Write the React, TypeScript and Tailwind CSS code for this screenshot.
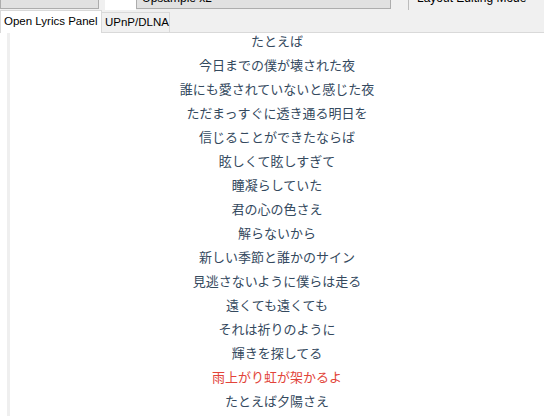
const lines = [
  'たとえば',
  '今日までの僕が壊された夜',
  '誰にも愛されていないと感じた夜',
  'ただまっすぐに透き通る明日を',
  '信じることができたならば',
  '眩しくて眩しすぎて',
  '瞳凝らしていた',
  '君の心の色さえ',
  '解らないから',
  '新しい季節と誰かのサイン',
  '見逃さないように僕らは走る',
  '遠くても遠くても',
  'それは祈りのように',
  '輝きを探してる',
  '雨上がり虹が架かるよ',
  'たとえば夕陽さえ',
]

const current = 14

export default function App() {
  return (
    <div
      className="w-[544px] h-[416px] overflow-hidden bg-[#f0f0f0] flex flex-col"
      style={{ fontFamily: '"Liberation Sans", "Noto Sans CJK JP", sans-serif' }}
    >
      {/* cut-off toolbar */}
      <div className="h-[10px] flex shrink-0">
        <div className="w-[99px] h-[9px] bg-[#e1e1e1] border border-t-0 border-[#adadad]" />
        <div className="w-[6px]" />
        <div className="w-[31px] h-[10px] bg-white" />
        <div className="w-[255px] h-[9px] bg-[#e1e1e1] border border-t-0 border-[#adadad] overflow-hidden">
          <div className="text-[12px] leading-[14px] -mt-[9px] pl-[5px] text-black">Upsample x2</div>
        </div>
        <div className="w-[17px]" />
        <div className="w-px h-[10px] bg-[#bcbcbc]" />
        <div className="h-[9px] overflow-hidden">
          <div className="text-[12px] leading-[14px] -mt-[9px] pl-[8px] text-black whitespace-nowrap">Layout Editing Mode</div>
        </div>
      </div>

      {/* tabs */}
      <div className="h-[23px] flex items-end shrink-0 border-b border-[#d9d9d9] relative">
        <div className="w-[102px] h-[23px] bg-white border border-b-0 border-[#d9d9d9] -mb-px relative z-10 flex items-center pl-[3px] text-[11.5px] text-black whitespace-nowrap">
          Open Lyrics Panel
        </div>
        <div className="w-[68px] h-[20px] bg-[#f0f0f0] border border-l-0 border-b-0 border-[#d9d9d9] flex items-center pl-[3px] text-[11.5px] text-black whitespace-nowrap">
          UPnP/DLNA
        </div>
      </div>

      {/* content */}
      <div className="flex-1 bg-white flex overflow-hidden">
        <div className="w-[7px] shrink-0" />
        <div className="w-[3px] shrink-0 bg-[#efefef]" />
        <div className="flex-1 overflow-hidden">
          <div className="-mt-[3px] flex flex-col items-center">
            {lines.map((line, i) => (
              <div
                key={i}
                className={
                  'h-[24px] leading-[24px] text-[13px] whitespace-nowrap ' +
                  (i === current ? 'text-[#e2443a]' : 'text-[#34495e]')
                }
              >
                {line}
              </div>
            ))}
          </div>
        </div>
      </div>
    </div>
  )
}
